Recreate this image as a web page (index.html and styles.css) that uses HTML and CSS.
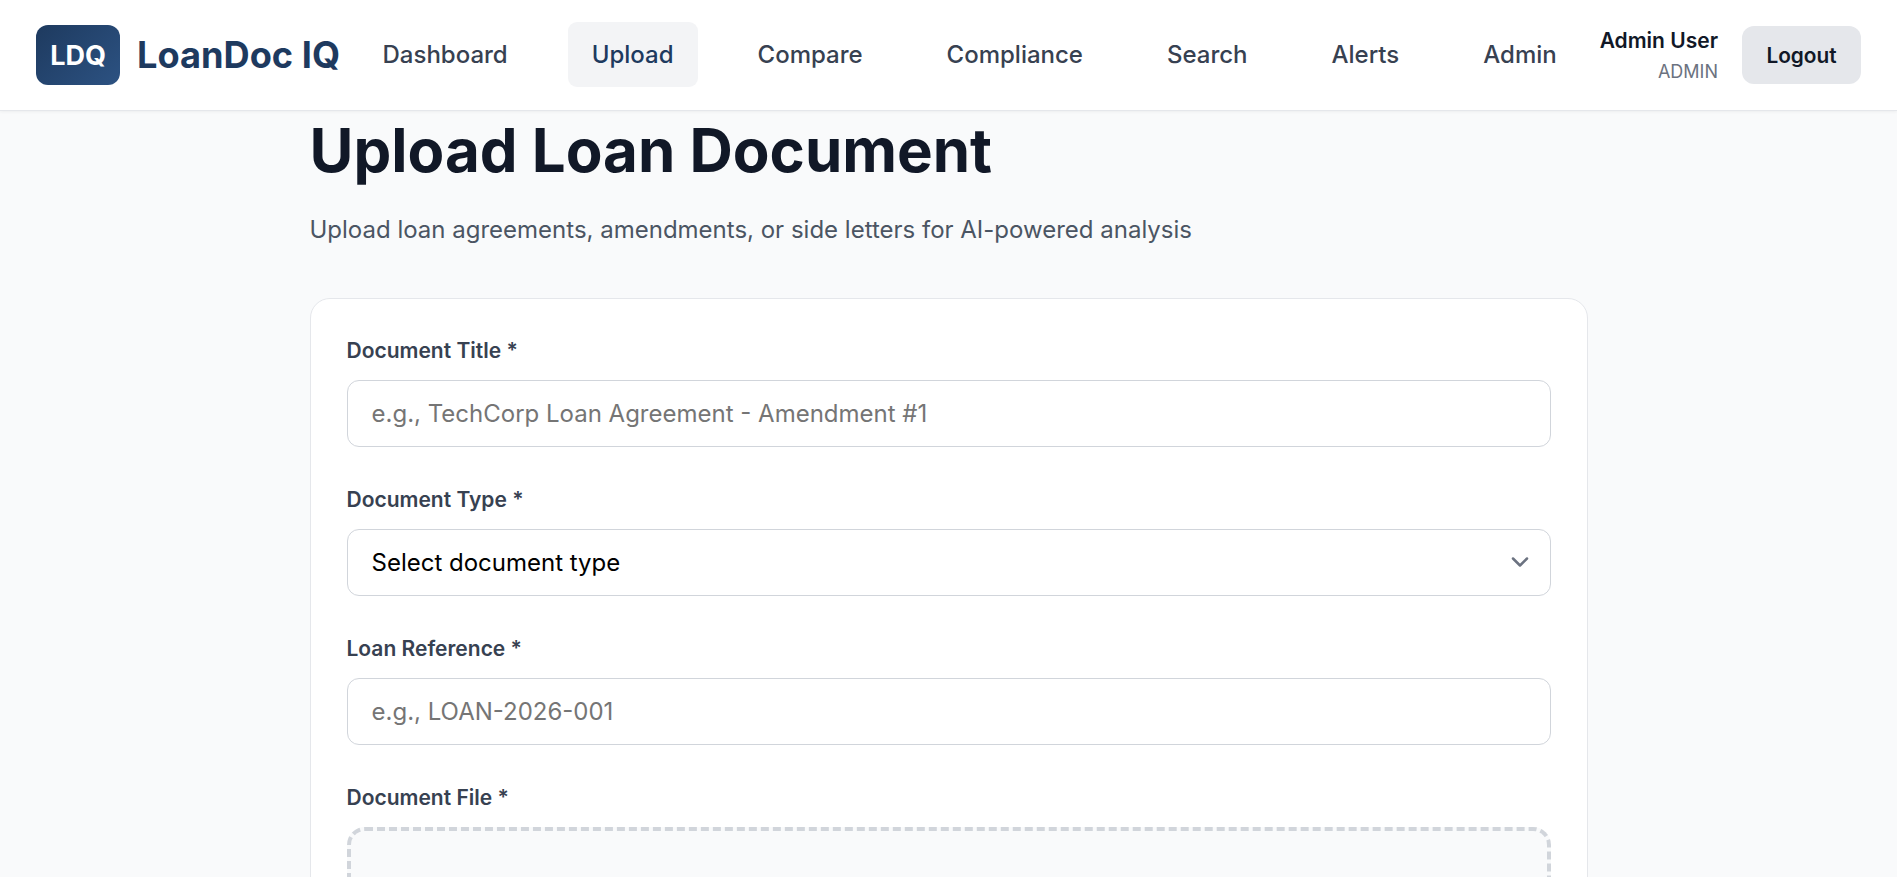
FILE: index.html
```html
<!DOCTYPE html>
<html lang="en">
<head>
<meta charset="utf-8">
<title>LoanDoc IQ</title>
<link rel="stylesheet" href="styles.css">
</head>
<body>
<header class="topbar">
  <div class="brand">
    <div class="logo">LDQ</div>
    <span class="brand-name">LoanDoc IQ</span>
  </div>
  <nav class="nav">
    <a class="nav-item" href="#">Dashboard</a>
    <a class="nav-item active" href="#">Upload</a>
    <a class="nav-item" href="#">Compare</a>
    <a class="nav-item" href="#">Compliance</a>
    <a class="nav-item" href="#">Search</a>
    <a class="nav-item" href="#">Alerts</a>
    <a class="nav-item" href="#">Admin</a>
  </nav>
  <div class="user">
    <div class="user-info">
      <div class="user-name">Admin User</div>
      <div class="user-role">ADMIN</div>
    </div>
    <button class="logout" type="button">Logout</button>
  </div>
</header>
<main class="main">
  <h1 class="title">Upload Loan Document</h1>
  <p class="subtitle">Upload loan agreements, amendments, or side letters for AI-powered analysis</p>
  <form class="card">
    <div class="field">
      <label class="label" for="t">Document Title *</label>
      <input class="control" id="t" type="text" placeholder="e.g., TechCorp Loan Agreement - Amendment #1">
    </div>
    <div class="field">
      <label class="label" for="d">Document Type *</label>
      <div class="select-wrap">
        <select class="control select" id="d"><option>Select document type</option></select>
        <svg class="chevron" width="20" height="20" viewBox="0 0 20 20" fill="none"><path d="M3 6.5l7 7 7-7" stroke="#6b7280" stroke-width="2.5" stroke-linecap="round" stroke-linejoin="round"/></svg>
      </div>
    </div>
    <div class="field">
      <label class="label" for="l">Loan Reference *</label>
      <input class="control" id="l" type="text" placeholder="e.g., LOAN-2026-001">
    </div>
    <div class="field">
      <label class="label">Document File *</label>
      <div class="dropzone"></div>
    </div>
  </form>
</main>
</body>
</html>
```
FILE: styles.css
```css
* { box-sizing: border-box; }
html, body { margin: 0; height: 100%; overflow: hidden; }
body {
  font-family: Inter, "Liberation Sans", sans-serif;
  background: #f9fafb;
  color: #111827;
  display: flex;
  flex-direction: column;
}
.topbar {
  flex: none;
  height: 111px;
  background: #fff;
  border-bottom: 1px solid #e5e7eb;
  box-shadow: 0 1px 3px rgba(0,0,0,.05);
  padding: 0 36px;
  display: flex;
  align-items: center;
  position: relative;
  z-index: 1;
}
.brand { display: flex; align-items: center; gap: 17px; }
.logo {
  width: 84px;
  height: 60px;
  border-radius: 12px;
  background: linear-gradient(135deg, #1e3a5f, #2c5282);
  color: #fff;
  font-weight: 700;
  font-size: 27px;
  display: flex;
  align-items: center;
  justify-content: center;
}
.brand-name { font-size: 36.2px; font-weight: 700; color: #1e3a5f; white-space: nowrap; }
.nav { display: flex; flex: 1; gap: 36px; margin: 0 0 1px 18.5px; }
.nav-item {
  padding: 0 24px;
  height: 65px;
  display: flex;
  align-items: center;
  font-size: 24px;
  font-weight: 500;
  color: #374151;
  text-decoration: none;
  border-radius: 9px;
  white-space: nowrap;
}
.nav-item.active { background: #f3f4f6; color: #1e3a5f; }
.user { display: flex; align-items: center; gap: 24px; }
.user-info { text-align: right; margin-top: 3px; }
.user-name { font-size: 21px; font-weight: 600; color: #111827; line-height: 30px; }
.user-role { font-size: 18px; color: #6b7280; line-height: 30px; margin-top: 1px; }
.logout {
  width: 119px;
  height: 58px;
  border: 0;
  border-radius: 12px;
  background: #e5e7eb;
  color: #111827;
  font: 600 20.8px Inter, "Liberation Sans", sans-serif;
}
.main { width: 1278px; margin: 0 auto; flex: none; }
.title { margin: 0; font-size: 60px; line-height: 79px; font-weight: 700; color: #111827; }
.subtitle { margin: 22px 0 0; font-size: 24px; line-height: 36px; color: #4b5563; }
.card {
  margin-top: 50px;
  background: #fff;
  border: 1px solid #e5e7eb;
  border-radius: 20px;
  padding: 35px 36px 36px;
}
.field { margin-bottom: 36px; }
.label { display: block; font-size: 21px; font-weight: 600; color: #374151; line-height: 33px; margin-bottom: 13px; }
.control {
  display: block;
  width: 100%;
  height: 67px;
  padding: 0 24px;
  border: 1px solid #d1d5db;
  border-radius: 12px;
  background: #fff;
  font: 400 24px Inter, "Liberation Sans", sans-serif;
  color: #000;
}
.control::placeholder { color: #757575; opacity: 1; }
.select-wrap { position: relative; }
.select { appearance: none; }
.chevron { position: absolute; right: 21px; top: 23px; pointer-events: none; }
.dropzone {
  height: 240px;
  border: 4px dashed #d1d5db;
  border-radius: 18px;
  background: #f9fafb;
}
```
